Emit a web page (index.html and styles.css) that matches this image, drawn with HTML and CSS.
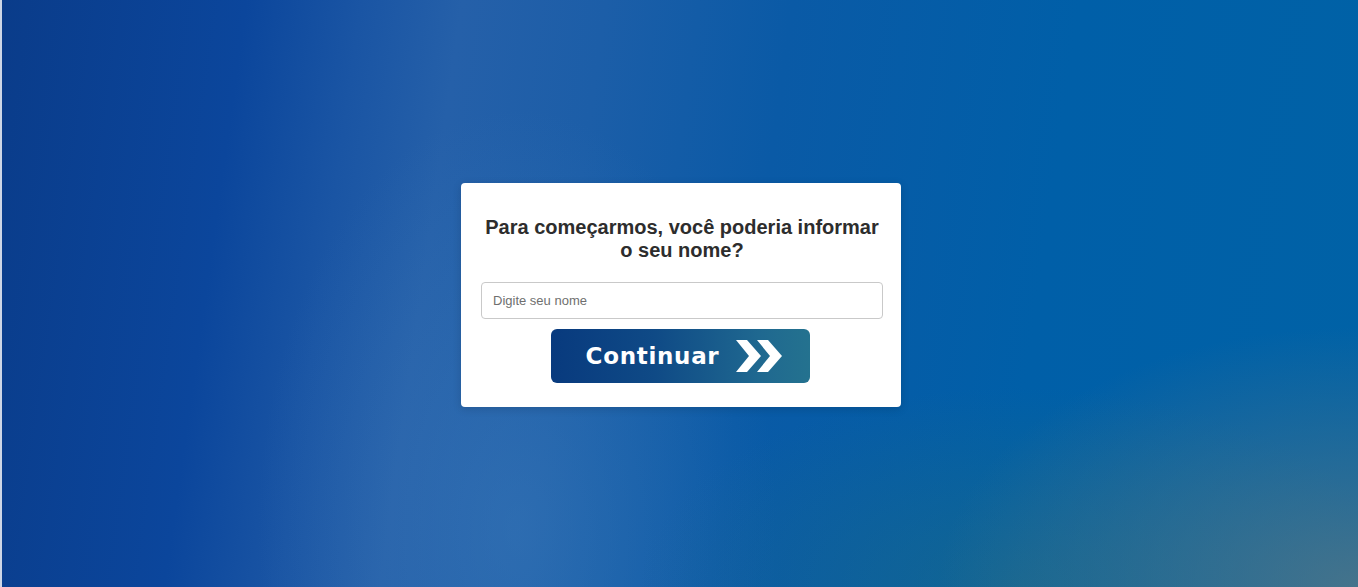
FILE: index.html
```html
<!DOCTYPE html>
<html lang="pt-BR">
<head>
<meta charset="utf-8">
<title>Nome</title>
<link rel="stylesheet" href="styles.css">
</head>
<body>
<div class="edge"></div>
<main class="stage">
  <section class="card">
    <h2 class="title">Para começarmos, você poderia informar o seu nome?</h2>
    <input class="name-input" type="text" placeholder="Digite seu nome">
    <button class="continue" type="button">
      <span class="continue-label">Continuar</span>
      <svg class="chevrons" width="47" height="32" viewBox="0 0 47 32" aria-hidden="true">
        <polygon points="0,0 11,0 25,16 11,32 0,32 13,16" fill="#fff"/>
        <polygon points="21,0 32,0 46,16 32,32 21,32 34,16" fill="#fff"/>
      </svg>
    </button>
  </section>
</main>
</body>
</html>
```
FILE: styles.css
```css
html, body {
  height: 100%;
  margin: 0;
}
body {
  display: flex;
  font-family: "Liberation Sans", Arial, sans-serif;
  background: #fff;
}
.edge {
  width: 2px;
  background: #cdd6e6;
}
.stage {
  flex: 1;
  display: flex;
  align-items: center;
  justify-content: center;
  background:
    radial-gradient(ellipse 420px 260px at 100% 100%, rgba(80,118,135,0.85), rgba(80,118,135,0) 100%),
    radial-gradient(ellipse 380px 200px at 75% 100%, rgba(40,110,120,0.45), rgba(40,110,120,0) 100%),
    radial-gradient(ellipse 260px 420px at 38% 90%, rgba(70,130,190,0.4), rgba(70,130,190,0) 100%),
    linear-gradient(98deg, #0a3c8a 0%, #0b469c 17%, #1a55a4 25%, #2560a9 32%, #1c5ea8 42%, #0a5aa6 55%, #005fa8 75%, #0062a6 100%);
}
.card {
  width: 402px;
  margin-top: 3px;
  margin-left: 2px;
  padding: 25px 18px 24px 20px;
  background: #fff;
  border-radius: 4px;
  box-shadow: 0 2px 8px rgba(0,0,0,0.15);
  display: flex;
  flex-direction: column;
  align-items: center;
}
.title {
  margin: 8px 0 20px;
  font-size: 20px;
  line-height: 23px;
  font-weight: bold;
  color: #2d2d2d;
  text-align: center;
}
.name-input {
  box-sizing: border-box;
  width: 402px;
  height: 37px;
  padding: 0 11px;
  border: 1px solid #c9c9c9;
  border-radius: 4px;
  font-family: "Liberation Sans", Arial, sans-serif;
  font-size: 13px;
  color: #333;
  outline: none;
}
.name-input::placeholder {
  color: #6f6f6f;
}
.continue {
  margin: 10px 4px 0 0;
  width: 259px;
  height: 54px;
  border: none;
  border-radius: 6px;
  background: linear-gradient(90deg, #083a7e 0%, #0f4a86 40%, #1f6890 80%, #24728f 100%);
  display: flex;
  align-items: center;
  justify-content: center;
  gap: 17px;
  padding: 0 0 0 9px;
  cursor: pointer;
}
.continue-label {
  font-family: "DejaVu Sans", "Open Sans", sans-serif;
  font-weight: bold;
  font-size: 23px;
  color: #fff;
  letter-spacing: 0.7px;
}
.chevrons {
  display: block;
}
```
